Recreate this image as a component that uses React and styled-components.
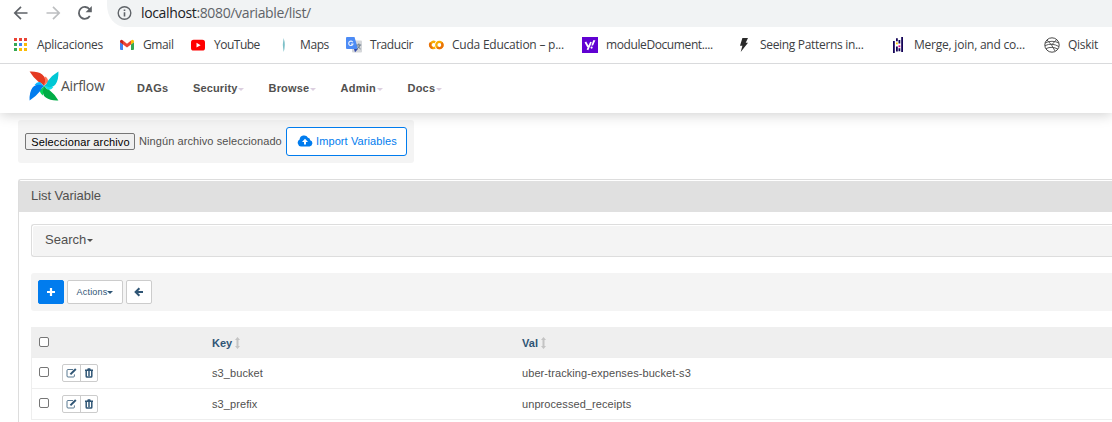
import React from "react";
import styled, { createGlobalStyle, css } from "styled-components";

const Global = createGlobalStyle`
  *, *::before, *::after { box-sizing: border-box; }
  html, body { margin: 0; background: #fff; overflow: hidden; }
  body { font-family: "Liberation Sans", Arial, sans-serif; font-size: 11px; color: #51504f; }
  svg { display: block; flex: none; }
  button { font-family: inherit; padding: 0; margin: 0; }
`;

const Screen = styled.div`
  width: 1112px;
  height: 422px;
  overflow: hidden;
  display: flex;
  flex-direction: column;
`;

/* Browser chrome */
const Chrome = styled.header`
  flex: none;
  position: relative;
  z-index: 2;
  background: #fff;
  height: 64px;
  border-bottom: 1px solid #d9dadc;
  font-family: "Open Sans", "Noto Sans", sans-serif;
`;
const AddressRow = styled.div`
  height: 27px;
  display: flex;
  align-items: flex-start;
  padding-left: 13px;
`;
const NavIcons = styled.div`
  display: flex;
  gap: 16px;
  width: 94px;
  padding-top: 5px;
`;
const AddressBar = styled.div`
  flex: 1;
  height: 27px;
  background: #f1f3f4;
  border-radius: 0 0 0 18px / 0 0 0 22px;
  display: flex;
  gap: 9px;
  padding: 5px 0 0 10px;
`;
const Url = styled.span`
  font-size: 14px;
  line-height: 16px;
  letter-spacing: ${(p) => p.$spacing}px;
  color: #5f6368;
  white-space: nowrap;
  b { font-weight: 400; color: #202124; }
`;
const Bookmarks = styled.nav`
  display: flex;
  padding: 10px 0 0 13px;
`;
const Bookmark = styled.a`
  flex: none;
  width: ${(p) => p.$width}px;
  height: 16px;
  display: flex;
  align-items: center;
  gap: 8px;
  font-size: 12px;
  line-height: 16px;
  letter-spacing: ${(p) => p.$spacing}px;
  color: #3c4043;
  white-space: nowrap;
`;

/* Application navigation */
const Navbar = styled.nav`
  flex: none;
  position: relative;
  z-index: 1;
  height: 49px;
  background: #fff;
  box-shadow: 0 2px 12px rgba(0, 0, 0, 0.18);
  display: flex;
  align-items: center;
  padding: 0 0 2px 29px;
`;
const Brand = styled.a`
  display: flex;
  align-items: center;
  width: 108px;
  height: 34px;
  margin-top: -3px;
  gap: 2px;
  font: 14px/16px "Open Sans", sans-serif;
  letter-spacing: ${(p) => p.$spacing}px;
  color: #51504f;
`;
const NavItem = styled.a`
  width: ${(p) => p.$width}px;
  display: flex;
  align-items: center;
  gap: 1px;
  font-size: 11px;
  font-weight: 700;
  line-height: 14px;
  letter-spacing: ${(p) => p.$spacing}px;
`;
const Caret = styled.i`
  border: 3px solid transparent;
  border-top-color: ${(p) => p.$color || "currentColor"};
  border-bottom: 0;
  margin-top: ${(p) => p.$drop || 0}px;
`;

/* Page content */
const Content = styled.main`
  padding: 7px 0 0 18px;
  flex: none;
`;
const UploadForm = styled.form`
  width: 396px;
  height: 43px;
  background: #f4f4f4;
  border-radius: 3px;
  display: flex;
  align-items: center;
  padding-left: 7px;
`;
const FileButton = styled.button`
  width: 110px;
  height: 17px;
  border: 1px solid #767676;
  border-radius: 2px;
  background: #efefef;
  color: #000;
  font-size: 11px;
  line-height: 15px;
  padding: 1px 0 0 1px;
  letter-spacing: ${(p) => p.$spacing}px;
  white-space: nowrap;
`;
const FileName = styled.span`
  width: 147px;
  margin: -2px 0 0 4px;
  letter-spacing: ${(p) => p.$spacing}px;
  white-space: nowrap;
`;
const ImportButton = styled.button`
  width: 121px;
  height: 29px;
  border: 1px solid #017cee;
  border-radius: 3px;
  background: #fff;
  color: #017cee;
  display: flex;
  align-items: center;
  gap: 3px;
  padding: 0 0 2px 10px;
  font-size: 11px;
  letter-spacing: ${(p) => p.$spacing}px;
  white-space: nowrap;
`;
const Panel = styled.section`
  margin-top: 16px;
  height: 260px;
  border: 1px solid #ddd;
  border-right: 0;
  border-radius: 3px 0 0 0;
  padding-top: 1px;
`;
const PanelTitle = styled.h2`
  margin: 0;
  height: 31px;
  background: #e0e0e0;
  padding-left: 12px;
  font-size: 13px;
  font-weight: 400;
  line-height: 29px;
  letter-spacing: ${(p) => p.$spacing}px;
`;
const PanelBody = styled.div`
  padding: 12px 0 0 12px;
`;
const SearchBox = styled.div`
  height: 33px;
  border: 1px solid #ddd;
  border-right: 0;
  border-radius: 3px 0 0 3px;
  background: #f4f4f4;
  box-shadow: inset 1px 1px 0 #fff;
  display: flex;
  align-items: center;
  gap: 1px;
  padding: 0 0 3px 13px;
  font-size: 13px;
  letter-spacing: ${(p) => p.$spacing}px;
`;
const ActionBar = styled.div`
  margin-top: 16px;
  height: 38px;
  background: #f4f4f4;
  border-radius: 3px 0 0 3px;
  display: flex;
  align-items: center;
  gap: 3px;
  padding-left: 7px;
`;
const SmallButton = styled.button`
  width: ${(p) => p.$width}px;
  height: 24px;
  border: 1px solid #ccc;
  border-radius: 2px;
  background: #fff;
  color: #2f5575;
  display: flex;
  align-items: center;
  justify-content: center;
  font-size: 9px;
  letter-spacing: ${(p) => p.$spacing || 0}px;
  ${(p) =>
    p.$primary &&
    css`
      background: #017cee;
      border-color: #017cee;
      color: #fff;
    `}
`;
const Table = styled.div`
  margin-top: 16px;
  border-left: 1px solid #eee;
`;
const Row = styled.div`
  display: grid;
  grid-template-columns: 30px 150px 310px 1fr;
  align-items: center;
  height: 31px;
  border-bottom: 1px solid #eee;
  background: ${(p) => (p.$head ? "#efefef" : "#fff")};
  ${(p) =>
    p.$head &&
    css`
      margin-left: -1px;
      padding: 2px 0 0 1px;
    `}
`;
const Check = styled.span`
  width: 10px;
  height: 10px;
  margin: -2px 0 0 7px;
  border: 1px solid #767676;
  border-radius: 2px;
  background: #fff;
`;
const Cell = styled.span`
  letter-spacing: ${(p) => p.$spacing}px;
  white-space: nowrap;
`;
const HeadCell = styled.span`
  display: flex;
  align-items: center;
  gap: 3px;
  font-weight: 700;
  color: #2f5575;
  letter-spacing: ${(p) => p.$spacing}px;
`;
const IconGroup = styled.div`
  display: flex;
  width: 36px;
  height: 18px;
  border: 1px solid #ccc;
  border-radius: 2px;
  color: #2f5575;
`;
const IconButton = styled.span`
  flex: 1;
  display: flex;
  align-items: center;
  justify-content: center;
  & + & { border-left: 1px solid #ccc; }
`;

const Arrow = ({ color, flip }) => (
  <svg width="16" height="16" viewBox="0 0 16 16" fill="none" stroke={color} strokeWidth="1.7">
    <path d={flip ? "M1.5 8H14M8 1.8L14.2 8L8 14.2" : "M14.5 8H2M8 1.8L1.8 8L8 14.2"} />
  </svg>
);
const Reload = () => (
  <svg width="16" height="16" viewBox="0 0 16 16">
    <path d="M12.8 11A5.9 5.9 0 1 1 12.5 4.3" fill="none" stroke="#5f6368" strokeWidth="1.8" />
    <path d="M14.8 1V7.2H8.6Z" fill="#5f6368" />
  </svg>
);
const Info = () => (
  <svg width="15" height="16" viewBox="0 0 15 16">
    <circle cx="7.5" cy="8" r="6.3" fill="none" stroke="#5f6368" strokeWidth="1.4" />
    <path d="M6.7 7.2h1.6v4.2H6.7zM6.7 4.6h1.6v1.5H6.7z" fill="#5f6368" />
  </svg>
);

const AppsIcon = () => {
  const colors = ["#ea4335", "#ea4335", "#ea4335", "#34a853", "#4285f4", "#fbbc04", "#34a853", "#fbbc04", "#fbbc04"];
  return (
    <svg width="16" height="16">
      {colors.map((c, i) => (
        <rect key={i} x={1 + (i % 3) * 5} y={1 + Math.floor(i / 3) * 5} width="3" height="3" fill={c} />
      ))}
    </svg>
  );
};
const GmailIcon = () => (
  <svg width="16" height="16">
    <path d="M1 5L4 7.2V13H2a1 1 0 0 1-1-1Z" fill="#4285f4" />
    <path d="M15 5L12 7.2V13h2a1 1 0 0 0 1-1Z" fill="#34a853" />
    <path d="M4 3.6L8 6.8L12 3.6V7.4L8 10.4L4 7.4Z" fill="#ea4335" />
    <path d="M1 4.4Q1 2.8 2.6 2.8L4 3.6V7.4L1 5.2Z" fill="#c5221f" />
    <path d="M15 4.4Q15 2.8 13.4 2.8L12 3.6V7.4L15 5.2Z" fill="#fbbc04" />
  </svg>
);
const YouTubeIcon = () => (
  <svg width="16" height="16">
    <rect x="1" y="2.8" width="14" height="10.8" rx="2.6" fill="#f00" />
    <path d="M6.5 5.8L10.6 8.2L6.5 10.6Z" fill="#fff" />
  </svg>
);
const MapsIcon = () => (
  <svg width="16" height="16">
    <path d="M7.6 1Q10 8 7.6 15Q6 8 7.6 1Z" fill="#7cc0c8" />
  </svg>
);
const TranslateIcon = () => (
  <svg width="16" height="16">
    <rect x="6" y="3.5" width="10" height="12" rx="1" fill="#d5d7da" />
    <path d="M1 0H8.5L12 12H1Q0 12 0 11V1Q0 0 1 0Z" fill="#4c8bf5" />
    <path d="M8 12H12L9 15.3Z" fill="#3047a8" />
    <path d="M6.8 5.2A2.2 2.2 0 1 0 7 7H5" fill="none" stroke="#e7effd" strokeWidth="1.1" />
    <path d="M10.4 8h4.8M12.8 6.5V8M14 8Q13 11 10.8 12M11.5 9.2L14.6 12" fill="none" stroke="#697b8b" />
  </svg>
);
const ColabIcon = () => (
  <svg width="16" height="16" fill="none" strokeWidth="2.3">
    <path d="M7.2 5.3A3.1 3.1 0 1 0 7.2 10.6" stroke="#f9ab00" />
    <path d="M2.8 5.8A3.1 3.1 0 0 0 4.6 11" stroke="#e8710a" />
    <circle cx="11.4" cy="8" r="3.1" stroke="#f9ab00" />
    <path d="M13.6 5.8A3.1 3.1 0 0 1 9.2 10.2" stroke="#e8710a" />
  </svg>
);
const YahooIcon = () => (
  <svg width="16" height="16">
    <rect width="16" height="16" fill="#6001d2" />
    <path d="M3.4 5L6 9.8M9 5L5.5 12.8" stroke="#fff" strokeWidth="1.8" />
    <path d="M11.2 3.2H13.4L11 8.6H9.4Z" fill="#fff" />
    <circle cx="9.6" cy="10.6" r="1.1" fill="#fff" />
  </svg>
);
const BoltIcon = () => (
  <svg width="16" height="16">
    <path d="M6.4 1H12L9.7 5.7H12L4.7 15L6.4 8.8H4Z" fill="#2a2a2a" />
  </svg>
);
const PandasIcon = () => (
  <svg width="16" height="16" fill="#150458">
    <path d="M3 4h1.8v12H3zM11.2 0H13v15h-1.8zM6 1.2h1.8v3H6zM6 9.6h1.8v4.8H6zM8.5 3h1.8v3.4H8.5zM8.5 11.2h1.8v3H8.5z" />
    <path d="M6 5.4h1.8v1.8H6z" fill="#ffca00" />
    <path d="M8.5 8.4h1.8v1.8H8.5z" fill="#e70488" />
  </svg>
);
const GlobeIcon = () => (
  <svg width="16" height="16" fill="none" stroke="#4a4a4a">
    <circle cx="8" cy="8" r="7.2" />
    <path d="M1 6Q8 2.6 15 6M1 8.6Q8 5.4 15 9.6M2 11.6Q8 8.8 14 12.2M3 3L7.6 8M12.4 2.8L7.6 8L11 14" strokeWidth=".9" />
  </svg>
);

const Pinwheel = () => (
  <svg width="30" height="30" viewBox="0 0 30 30">
    {[
      ["#e43921", "#ff7557", 0],
      ["#00c7d4", "#11e1ee", 90],
      ["#00ad46", "#04d659", 180],
      ["#017cee", "#0cb6ff", 270],
    ].map(([dark, light, angle]) => (
      <g key={angle} transform={`rotate(${angle} 15 15)`}>
        <path d="M15 15L16 5.6Q19.4 7.6 19 11Z" fill={light} />
        <path d="M15 15Q13 12 9.4 10.8Q4.6 7.2 .6 .6Q8.6 .2 13.2 3.4Q18 7 15 15Z" fill={dark} />
      </g>
    ))}
  </svg>
);
const CloudUpload = () => (
  <svg width="16" height="12" viewBox="0 0 16 12">
    <path d="M4 11.4A3.7 3.7 0 0 1 2.6 4.5A4.5 4.5 0 0 1 11 2.7A2.7 2.7 0 0 1 13.2 5.2A3.2 3.2 0 0 1 12.6 11.4Z" fill="currentColor" />
    <path d="M8 3.8L11 7H9V9.4H7V7H5Z" fill="#fff" />
  </svg>
);
const PlusIcon = () => (
  <svg width="10" height="10">
    <path d="M5 1V9M1 5H9" stroke="currentColor" strokeWidth="2.2" />
  </svg>
);
const BackIcon = () => (
  <svg width="10" height="10" fill="none" stroke="currentColor" strokeWidth="2">
    <path d="M9 5H2M5.4 1.2L1.6 5L5.4 8.8" />
  </svg>
);
const SortIcon = () => (
  <svg width="5" height="12">
    <path d="M2.5 0L5 3H3.5V9H5L2.5 12L0 9H1.5V3H0Z" fill="#c4c4c4" />
  </svg>
);
const EditIcon = () => (
  <svg width="11" height="10" fill="none" stroke="currentColor">
    <path d="M7 1.5H2Q1 1.5 1 2.5V8Q1 9 2 9H7.4Q8.4 9 8.4 8V6.4" strokeWidth=".8" />
    <path d="M4.4 6.4L9.8 1" strokeWidth="2" />
  </svg>
);
const TrashIcon = () => (
  <svg width="8" height="10">
    <path d="M0 1.5H2.2L2.8 .2H5.2L5.8 1.5H8V3H0Z" fill="currentColor" />
    <path d="M1.2 3V8.2Q1.2 9 2 9H6Q6.8 9 6.8 8.2V3M4 3V8" fill="none" stroke="currentColor" strokeWidth="1.5" />
  </svg>
);

const bookmarks = [
  { label: "Aplicaciones", Icon: AppsIcon, width: 106, spacing: -0.28 },
  { label: "Gmail", Icon: GmailIcon, width: 71, spacing: -0.4 },
  { label: "YouTube", Icon: YouTubeIcon, width: 86, spacing: -0.5 },
  { label: "Maps", Icon: MapsIcon, width: 70, spacing: -0.4 },
  { label: "Traducir", Icon: TranslateIcon, width: 82, spacing: -0.45 },
  { label: "Cuda Education – p...", Icon: ColabIcon, width: 154, spacing: -0.23 },
  { label: "moduleDocument....", Icon: YahooIcon, width: 154, spacing: -0.4 },
  { label: "Seeing Patterns in...", Icon: BoltIcon, width: 154, spacing: -0.32 },
  { label: "Merge, join, and co...", Icon: PandasIcon, width: 154, spacing: -0.22 },
  { label: "Qiskit", Icon: GlobeIcon, width: 60, spacing: -0.3 },
];
const menu = [
  { label: "DAGs", width: 56, spacing: 0.15 },
  { label: "Security", width: 75.5, spacing: 0.13, caret: true },
  { label: "Browse", width: 72, spacing: 0.2, caret: true },
  { label: "Admin", width: 67, spacing: 0.25, caret: true },
  { label: "Docs", width: 60, spacing: 0.2, caret: true },
];
const variables = [
  { name: "s3_bucket", value: "uber-tracking-expenses-bucket-s3" },
  { name: "s3_prefix", value: "unprocessed_receipts" },
];

export default function App() {
  return (
    <Screen>
      <Global />
      <Chrome>
        <AddressRow>
          <NavIcons>
            <Arrow color="#5f6368" />
            <Arrow color="#bdbfc1" flip />
            <Reload />
          </NavIcons>
          <AddressBar>
            <Info />
            <Url $spacing={-0.36}><b>localhost</b>:8080/variable/list/</Url>
          </AddressBar>
        </AddressRow>
        <Bookmarks>
          {bookmarks.map(({ label, Icon, width, spacing }) => (
            <Bookmark key={label} $width={width} $spacing={spacing}><Icon />{label}</Bookmark>
          ))}
        </Bookmarks>
      </Chrome>
      <Navbar>
        <Brand $spacing={-0.3}><Pinwheel />Airflow</Brand>
        {menu.map((m) => (
          <NavItem key={m.label} $width={m.width} $spacing={m.spacing}>
            {m.label}
            {m.caret && <Caret $color="#dccfe0" $drop={3} />}
          </NavItem>
        ))}
      </Navbar>
      <Content>
        <UploadForm>
          <FileButton type="button" $spacing={0.13}>Seleccionar archivo</FileButton>
          <FileName $spacing={0.08}>Ningún archivo seleccionado</FileName>
          <ImportButton type="button" $spacing={0.1}><CloudUpload />Import Variables</ImportButton>
        </UploadForm>
        <Panel>
          <PanelTitle $spacing={-0.05}>List Variable</PanelTitle>
          <PanelBody>
            <SearchBox $spacing={0}>Search<Caret $drop={2} /></SearchBox>
            <ActionBar>
              <SmallButton $width={26} $primary><PlusIcon /></SmallButton>
              <SmallButton $width={56} $spacing={0.2}>Actions<Caret $drop={1} /></SmallButton>
              <SmallButton $width={26}><BackIcon /></SmallButton>
            </ActionBar>
            <Table>
              <Row $head>
                <Check />
                <span />
                <HeadCell $spacing={0}>Key<SortIcon /></HeadCell>
                <HeadCell $spacing={0.1}>Val<SortIcon /></HeadCell>
              </Row>
              {variables.map((v) => (
                <Row key={v.name}>
                  <Check />
                  <IconGroup>
                    <IconButton><EditIcon /></IconButton>
                    <IconButton><TrashIcon /></IconButton>
                  </IconGroup>
                  <Cell $spacing={0.09}>{v.name}</Cell>
                  <Cell $spacing={0.08}>{v.value}</Cell>
                </Row>
              ))}
            </Table>
          </PanelBody>
        </Panel>
      </Content>
    </Screen>
  );
}
